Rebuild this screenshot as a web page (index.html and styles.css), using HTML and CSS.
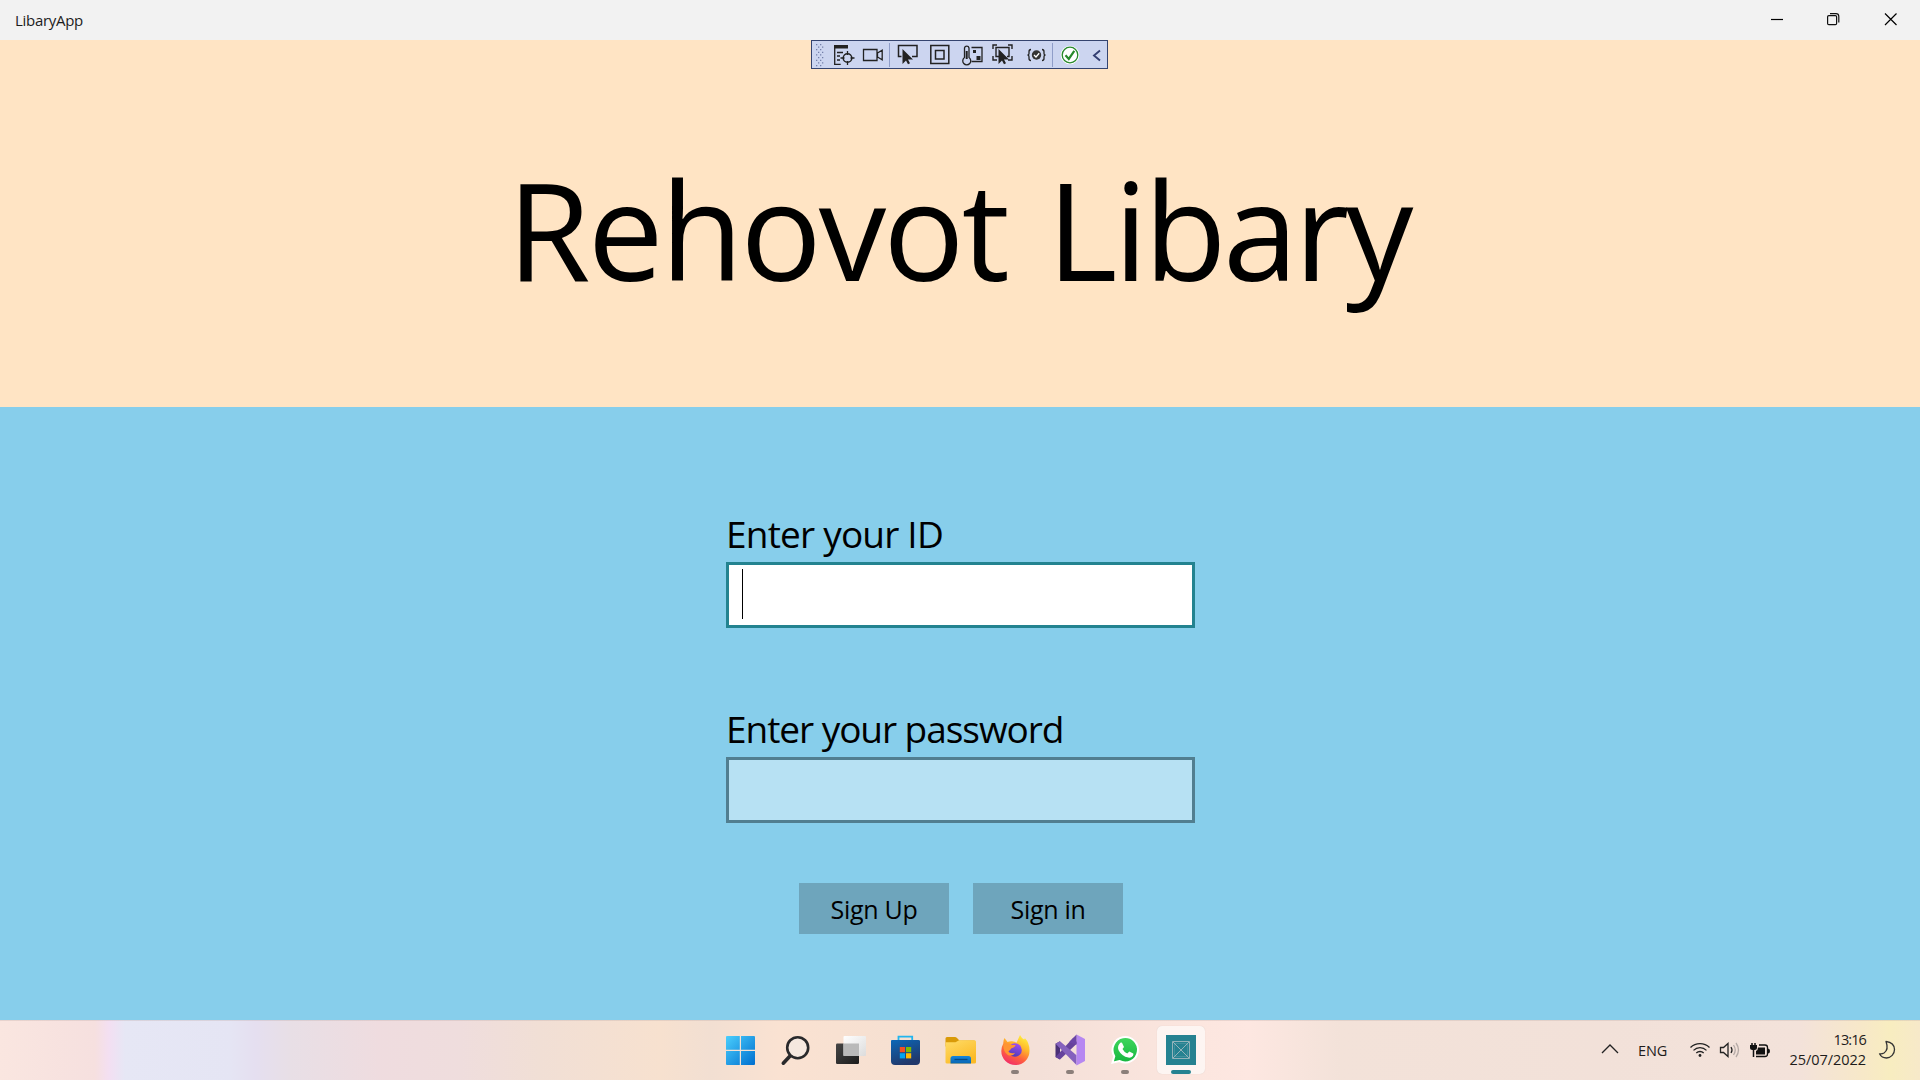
FILE: index.html
```html
<!DOCTYPE html>
<html lang="en">
<head>
<meta charset="utf-8">
<title>LibaryApp</title>
<link rel="stylesheet" href="styles.css">
</head>
<body>
<header class="titlebar">
  <span class="app-name">LibaryApp</span>
  <div class="window-controls">
    <svg width="57" height="40" viewBox="0 0 57 40"><path d="M23 19.5h12" stroke="#000" stroke-width="1.2"/></svg>
    <svg width="57" height="40" viewBox="0 0 57 40" fill="none" stroke="#111" stroke-width="1.2"><rect x="22.6" y="15.6" width="9" height="9" rx="1.2"/><path d="M25 13.6h6a2.8 2.8 0 0 1 2.8 2.8v6"/></svg>
    <svg width="57" height="40" viewBox="0 0 57 40"><path d="M23 13.5l11.5 11.5M34.500 13.5L23 25" stroke="#000" stroke-width="1.2"/></svg>
  </div>
</header>

<section class="banner">
  <div class="debug-bar">
    <svg width="295" height="27" viewBox="0 0 295 27" fill="none" stroke="#222" stroke-width="1.3">
      <g fill="#7480aa" stroke="none">
        <path d="M4 3h1.300v1.300h-1.300zM8 3h1.300v1.300h-1.300zM6 5.500h1.300v1.300h-1.300zM10 5.500h1.300v1.300h-1.300zM4 8h1.300v1.300h-1.300zM8 8h1.300v1.300h-1.300zM6 10.700h1.300v1.300h-1.300zM10 10.700h1.300v1.300h-1.300zM4 13.300h1.300v1.300h-1.300zM8 13.300h1.300v1.300h-1.300zM6 16h1.300v1.300h-1.300zM10 16h1.300v1.300h-1.300zM4 18.700h1.300v1.300h-1.300zM8 18.700h1.300v1.300h-1.300zM6 21.300h1.300v1.300h-1.300zM10 21.300h1.300v1.300h-1.300zM4 24h1.300v1.300h-1.300zM8 24h1.300v1.300h-1.300z"/>
      </g>
      <path d="M22 4h14v3.500h-14z" fill="#222" stroke="none"/>
      <path d="M22.700 5v18.300h6M25 11.500h6M25 15h3M25 19h3"/>
      <circle cx="35.500" cy="17" r="4.300" stroke-width="1.500"/><path d="M35.500 10v4M35.500 20v4M28.500 17h4M38.500 17h4"/>
      <path d="M51.500 8.500h13.500v11h-13.500zM65.500 12l4.700-2.800v9.600l-4.700-2.800z"/>
      <path d="M77.500 2v24M240.500 2v24" stroke="#8f9dc8" stroke-width="1"/>
      <path d="M89.500 15.500h-3v-11h18.500v11h-5" stroke-width="1.500"/>
      <path d="M90.500 8v15l3.500-3.500 2 3.800 2-1-2-3.800h5z" fill="#222" stroke="none"/>
      <path d="M118.800 4.500h18v18h-18zM123.500 9.500h8.500v8.500h-8.500z" stroke-width="1.500"/>
      <path d="M152.500 16.500V7a2.300 2.300 0 0 1 4.500 0v9.500a4 4 0 1 1-4.500 0z"/>
      <path d="M154.700 10v8" stroke-width="2"/><path d="M159.500 6.500h10.500v14h-10.500"/>
      <path d="M161 9h3v3h-3zM164.500 15h4v4h-4z" fill="#222" stroke="none"/>
      <path d="M181 8V4h4M196 4h4v4M181 15v4h4M196 19h4v-4M187 15.500h-3v-9h13v9h-2" stroke-width="1.400"/>
      <path d="M186.500 8v15l3.500-3.500 2 3.800 2-1-2-3.800h5z" fill="#222" stroke="none"/>
      <circle cx="224.500" cy="14" r="4.700" fill="#333" stroke="none"/><path d="M222 14l2 2 3.200-3.700" stroke="#fff"/>
      <path d="M219 8.500q-2 0-2 2.200v1.700q0 1.600-1.500 1.600 1.500 0 1.500 1.700v1.800q0 2 2 2M230 8.500q2 0 2 2.200v1.700q0 1.600 1.500 1.600-1.500 0-1.500 1.700v1.800q0 2-2 2"/>
      <circle cx="258" cy="14" r="8.700" fill="#fff" stroke="#fff"/><circle cx="258" cy="14" r="7.800" stroke="#27892b"/>
      <path d="M253.500 14.200l3.300 3.700 5.500-8" stroke="#27892b" stroke-width="2.200"/>
      <path d="M288 9.500l-6 5 6 5" stroke="#333e72" stroke-width="1.900"/>
    </svg>
  </div>
  <h1 class="headline"><span class="city">Rehovot</span> <span class="kind">Libary</span></h1>
</section>

<main class="login">
  <form class="form">
    <label class="label label-id" for="uid">Enter your ID</label>
    <div class="field field-active" id="uid"><span class="caret"></span></div>
    <label class="label label-password" for="pwd">Enter your password</label>
    <div class="field" id="pwd"></div>
    <div class="actions">
      <button type="button" class="button">Sign Up</button>
      <button type="button" class="button">Sign in</button>
    </div>
  </form>
</main>

<footer class="taskbar">
  <nav class="apps">
    <div class="app">
      <svg width="48" height="48" viewBox="0 0 48 48"><defs><linearGradient id="win" gradientUnits="userSpaceOnUse" x1="9" y1="10" x2="38" y2="39"><stop offset="0" stop-color="#4cd0fd"/><stop offset="1" stop-color="#0070d0"/></linearGradient></defs><path d="M10 11q0-1 1-1h12.800v13.800H10zM25 10h13q1 0 1 1v12.800h-14zM10 25h13.800v14H11q-1 0-1-1zM25 25h14v13q0 1-1 1h-13z" fill="url(#win)"/></svg>
    </div>
    <div class="app">
      <svg width="48" height="48" viewBox="0 0 48 48" fill="none" stroke="#29292b" stroke-linecap="round"><path d="M19.500 29.500l-7.200 7.700" stroke-width="3.600"/><circle cx="26.700" cy="21.700" r="10.500" stroke-width="2.600" fill="#f5e8df"/></svg>
    </div>
    <div class="app">
      <svg width="48" height="48" viewBox="0 0 48 48"><defs><linearGradient id="dark" x2="1" y2="1"><stop stop-color="#454545"/><stop offset="1" stop-color="#1c1c1c"/></linearGradient><linearGradient id="pale" x2="1" y2="1"><stop stop-color="#fff"/><stop offset="1" stop-color="#dcdcdc"/></linearGradient></defs><rect x="10" y="17.500" width="23" height="20.500" rx="1.200" fill="url(#dark)"/><rect x="17.500" y="10" width="22.500" height="20" rx="1" fill="url(#pale)"/><path d="M17.500 17.500h15.500v12.500h-15.500z" fill="#b9b9b9"/></svg>
    </div>
    <div class="app">
      <svg width="48" height="48" viewBox="0 0 48 48"><defs><linearGradient id="store" x2=".4" y2="1"><stop stop-color="#0b68b8"/><stop offset="1" stop-color="#21386b"/></linearGradient></defs><path d="M17.500 15v-4.300h13.700V15" fill="none" stroke="#22b5ee" stroke-width="1.800"/><path d="M10 15q0-1 1-1h26.500q1.500 0 1.500 1v20q0 4-4 4h-21q-4 0-4-4z" fill="url(#store)"/><path d="M18.800 21h5.200v5.200h-5.200z" fill="#f25022"/><path d="M25 21h5.200v5.200h-5.200z" fill="#7fba00"/><path d="M18.800 27.200h5.200v5.200h-5.200z" fill="#00a4ef"/><path d="M25 27.200h5.200v5.200h-5.200z" fill="#ffb900"/></svg>
    </div>
    <div class="app">
      <svg width="48" height="48" viewBox="0 0 48 48"><defs><linearGradient id="folder" x2=".6" y2="1"><stop stop-color="#ffdc68"/><stop offset="1" stop-color="#fbba25"/></linearGradient><linearGradient id="tray" x2="0" y2="1"><stop stop-color="#1686dc"/><stop offset="1" stop-color="#0766b2"/></linearGradient></defs><path d="M9.500 12.500q0-1.500 1.500-1.500h8q1 0 2 1l2.500 2.500h15v6H9.500z" fill="#d99a08"/><path d="M9.500 16.200h10l3.500-2H38.500q1.500 0 1.500 1.500v20.500q0 1.300-1.500 1.300H11q-1.500 0-1.500-1.300z" fill="url(#folder)"/><path d="M14.500 37.500v-5q0-2.500 2.500-2.500h15.500q2.500 0 2.500 2.500v5z" fill="url(#tray)"/><path d="M18.500 33.500h13" stroke="#064a85" stroke-width="1.300"/></svg>
    </div>
    <div class="app app-running">
      <svg width="48" height="48" viewBox="0 0 48 48"><defs><linearGradient id="fox" x1=".75" y1="0" x2=".25" y2="1"><stop stop-color="#fff13e"/><stop offset=".35" stop-color="#ffb62b"/><stop offset=".65" stop-color="#ff623c"/><stop offset="1" stop-color="#f0286e"/></linearGradient><linearGradient id="globe" x1=".6" x2=".3" y2="1"><stop stop-color="#a24ef0"/><stop offset="1" stop-color="#4d3bb6"/></linearGradient></defs><path d="M13.500 12l3 4q2-1 4.500-.8 3 .3 4.500 1.500L29 9q1.500 3 4 4.500 1-.7.800-1.500 4.900 5 4.700 13A14 14 0 0 1 10.300 25q0-4 2-7.500-.2-3 1.200-5.500z" fill="url(#fox)"/><circle cx="24" cy="24" r="6.800" fill="url(#globe)"/><path d="M12.500 18.500q5-2 8 .5h4q-.5 2.500-4 3.200-1.300 2-3.300 3.300 2 2.800 7 1.300-2 3.700-7 2.400-5.200-3-4.700-10.700z" fill="#ff9532"/></svg>
    </div>
    <div class="app app-running">
      <svg width="48" height="48" viewBox="0 0 48 48"><path d="M9.500 17.800l4.500-2.500v18.200l-4.500-2.600z" fill="#4a3077"/><path d="M9.500 31l18-19.500L31.500 17 14 33.500z" fill="#66429c"/><path d="M9.500 17.800l4.500-2.500 16.500 14v9.700z" fill="#8561bd"/><path d="M30.500 8.500l8.500 4.500v22l-8.500 4.500z" fill="#b687f1"/><path d="M30.500 8.500v10.300l-7.500-2.500z" fill="#6b45a6"/></svg>
    </div>
    <div class="app app-running">
      <svg width="48" height="48" viewBox="0 0 48 48"><defs><linearGradient id="chat" x2="0" y2="1"><stop stop-color="#3fd75d"/><stop offset="1" stop-color="#16b63e"/></linearGradient></defs><path d="M11.500 36.700l1.800-6.500a12.700 12.700 0 1 1 5 4.800z" fill="url(#chat)" stroke="#fff" stroke-width="2"/><path d="M18.300 18q1-1.700 2.700-1.300l2 4.300-1.500 2q1.500 3 4.800 4.500l2-2 4 2q.4 1-.5 2.500-1.500 2-4.500 1.600-6.500-1.400-9.600-7.100-1.600-3.500.6-6.500z" fill="#fff"/></svg>
    </div>
    <div class="app app-running app-current">
      <svg width="48" height="48" viewBox="0 0 48 48"><path d="M9 9h30v30H9z" fill="#258291"/><path d="M15.500 15.500h17v17h-17zM16 16l16 16M32 16l-16 16" fill="none" stroke="#9fb9be" stroke-width=".9"/><path d="M18 17.500h12M18 30.500h12M17.500 18v12M30.500 18v12" stroke="#5f9fa9" stroke-width=".5"/></svg>
    </div>
  </nav>
  <div class="tray">
    <svg class="chevron" width="18" height="12" viewBox="0 0 18 12"><path d="M1 10l8-8 8 8" fill="none" stroke="#222" stroke-width="1.300"/></svg>
    <span class="language">ENG</span>
    <svg class="wifi" width="22" height="20" viewBox="0 0 22 20" fill="none" stroke="#222" stroke-width="1.300"><path d="M1.500 7.500a13.500 13.500 0 0 1 19 0M4.500 10.400a9.200 9.200 0 0 1 13 0M7.300 13a5.300 5.300 0 0 1 7.400 0"/><circle cx="11" cy="15.500" r="1.400" fill="#222" stroke="none"/></svg>
    <svg class="sound" width="22" height="20" viewBox="0 0 22 20" fill="none" stroke="#222" stroke-width="1.300"><path d="M1.500 7.500h3l4.500-4v13l-4.500-4h-3z"/><path d="M12 7q2 3 0 6"/><path d="M14.500 5q3.500 5 0 10M17 3q5 7 0 14" stroke="#b5aaa6"/></svg>
    <svg class="battery" width="22" height="20" viewBox="0 0 22 20" fill="none" stroke="#111" stroke-width="1.300"><path d="M3 3v2.500M6 3v2.500M4.500 9v8" stroke-width="1.500"/><path d="M1 5h7v2.500q0 2.500-2.500 2.500h-2q-2.500 0-2.500-2.500zM9 7.500h7v7H7V11q2-1 2-3.500zM19 8.500q2 0 2 2.500t-2 2.500z" fill="#111" stroke="none"/><path d="M10 5h6q2.500 0 2.500 2.500v6.500q0 2.500-2.500 2.500H7"/></svg>
    <div class="clock"><span class="time">13:16</span><span class="date">25/07/2022</span></div>
    <svg class="moon" width="18" height="20" viewBox="0 0 18 20"><path d="M8 1.500q3 8-2 11.500-2 1.200-4.500.8 2.200 4.200 7 4.200a8.500 8.500 0 0 0 8-8.500q-.2-7-8.500-8z" fill="none" stroke="#333" stroke-width="1.300" stroke-linejoin="round"/></svg>
  </div>
</footer>
</body>
</html>
```
FILE: styles.css
```css
* { box-sizing: border-box; }

body {
  margin: 0;
  width: 1920px;
  height: 1080px;
  overflow: hidden;
  display: grid;
  grid-template-rows: 40px 367px 613px 60px;
  font-family: "Open Sans", "Noto Sans", sans-serif;
  color: #000;
}

svg { display: block; flex: none; }

.titlebar {
  display: flex;
  justify-content: space-between;
  background: #f2f2f2;
}

.app-name {
  padding: 1px 0 0 15px;
  font-size: 15px;
  line-height: 39px;
  letter-spacing: -0.3px;
  color: #1c1c1c;
}

.window-controls { display: flex; padding-right: 1px; }

.banner {
  display: flex;
  flex-direction: column;
  align-items: center;
  background: #ffe4c4;
}

.debug-bar {
  width: 297px;
  height: 29px;
  margin-right: 1px;
  border: 1px solid #35446f;
  background: #ccd5f0;
}

.headline {
  margin: 68px 3px 0 0;
  font-size: 135px;
  font-weight: 400;
  line-height: 184px;
  white-space: nowrap;
  word-spacing: 5px;
}

.city { letter-spacing: -2.9px; }
.kind { letter-spacing: -3.7px; }

.login {
  display: flex;
  justify-content: center;
  background: #87ceeb;
}

.form {
  width: 469px;
  margin-left: 1px;
  padding-top: 101px;
}

.label {
  display: block;
  height: 54px;
  font-size: 37px;
  line-height: 52px;
  white-space: nowrap;
}

.label-id { letter-spacing: -0.8px; }
.label-password { margin-top: 75px; letter-spacing: -1.05px; }

.field {
  height: 66px;
  border: 3px solid #517e90;
  background: #b7e1f3;
}

.field-active {
  padding: 4px 13px;
  border-color: #238390;
  background: #fff;
}

.caret {
  display: block;
  width: 1px;
  height: 50px;
  background: #000;
}

.actions {
  display: flex;
  justify-content: center;
  gap: 24px;
  margin-top: 60px;
  padding-left: 1px;
}

.button {
  width: 150px;
  height: 51px;
  padding: 1px 0 0;
  border: 0;
  background: #6ea5bc;
  font: 25px/50px "Open Sans", "Noto Sans", sans-serif;
  letter-spacing: -0.3px;
  color: #000;
}

.taskbar {
  display: grid;
  grid-template-columns: 712.5px 1fr auto;
  border-top: 1px solid rgba(190, 170, 165, 0.3);
  background: linear-gradient(90deg, #fae6e0 0, #f6e0df 95px, #f3dff2 109px, #e6e7f5 125px, #e5e5f4 230px, #e5dff0 255px, #e8dfe6 290px, #efdcdf 380px, #efdddd 460px, #f1dfd5 540px, #f7e1cf 660px, #f2dfd2 710px, #fae2d2 780px, #f4dfd1 950px, #f4e0d8 1040px, #fce6df 1200px, #fde7e1 1250px, #f3e2d9 1340px, #f2e1d9 1600px, #f3e2da 1800px, #f7e8c9 1860px, #f8edc0 1890px, #f7e9c9 1920px);
}

.apps {
  grid-column: 2;
  display: flex;
  padding-top: 5px;
}

.app {
  position: relative;
  width: 55px;
  height: 48px;
  display: flex;
  justify-content: center;
}

.app-running::after {
  content: "";
  position: absolute;
  bottom: 0;
  left: 23.5px;
  width: 8px;
  height: 4px;
  border-radius: 2px;
  background: #8b7f7a;
}

.app-current svg {
  margin-left: 1px;
  border-radius: 5px;
  background: #fdf5f2;
  box-shadow: 0 0 1px #d9c9c3;
}

.app-current::after {
  left: 18.5px;
  width: 20px;
  background: #258291;
}

.tray {
  display: flex;
  padding-right: 24px;
  color: #1e1c1b;
}

.chevron { margin-top: 22px; }

.language {
  width: 30px;
  margin-left: 19px;
  font-size: 14.5px;
  line-height: 20px;
  margin-top: 20px;
  letter-spacing: -0.1px;
}

.wifi, .sound, .battery { margin-top: 19px; }
.wifi { margin-left: 21px; }
.sound { margin-left: 8px; }
.battery { margin-left: 8px; }

.clock {
  width: 82px;
  margin-left: 13px;
  padding-top: 9px;
  display: flex;
  flex-direction: column;
  align-items: flex-end;
  font-size: 14.5px;
  line-height: 20px;
}

.time { letter-spacing: -0.9px; }
.date { letter-spacing: -0.05px; }

.moon { margin: 19px 0 0 12px; }
```
